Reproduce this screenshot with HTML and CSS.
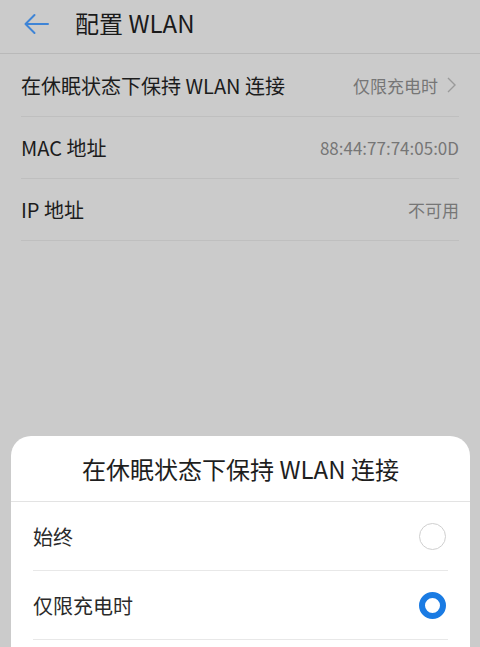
FILE: index.html
```html
<!DOCTYPE html>
<html lang="zh-CN">
<head>
<meta charset="utf-8">
<link rel="stylesheet" href="styles.css">
</head>
<body>
<div class="screen">
  <header class="topbar">
    <svg class="back" width="26" height="22" viewBox="0 0 26 22">
      <path d="M25 11H2.5M11.5 2L2.5 11L11.5 20" fill="none" stroke="#3e84d6" stroke-width="2" stroke-linecap="round" stroke-linejoin="round"/>
    </svg>
    <h1 class="title">配置 WLAN</h1>
  </header>
  <div class="list">
    <div class="row">
      <span class="label">在休眠状态下保持 WLAN 连接</span>
      <span class="value">仅限充电时
        <svg class="chev" width="9" height="16" viewBox="0 0 9 16"><path d="M1 1L8 8L1 15" fill="none" stroke="#9a9a9a" stroke-width="1.4"/></svg>
      </span>
    </div>
    <div class="row">
      <span class="label">MAC 地址</span>
      <span class="value">88:44:77:74:05:0D</span>
    </div>
    <div class="row">
      <span class="label">IP 地址</span>
      <span class="value">不可用</span>
    </div>
  </div>
  <div class="dialog">
    <div class="dlg-title">在休眠状态下保持 WLAN 连接</div>
    <div class="options">
      <div class="option">
        <span class="opt-label">始终</span>
        <span class="radio"></span>
      </div>
      <div class="option">
        <span class="opt-label">仅限充电时</span>
        <span class="radio on"></span>
      </div>
    </div>
  </div>
</div>
</body>
</html>
```
FILE: styles.css
```css
html, body {
  margin: 0;
  padding: 0;
}
body {
  width: 480px;
  height: 647px;
  overflow: hidden;
  background: #cbcbcb;
  font-family: "Noto Sans CJK SC", "Noto Sans", sans-serif;
  color: #1c1c1c;
}
.screen {
  position: relative;
  width: 480px;
  height: 647px;
  overflow: hidden;
}
.topbar {
  height: 53px;
  border-bottom: 1px solid #b9b9b9;
  display: flex;
  align-items: center;
  padding-left: 23px;
  box-sizing: content-box;
}
.back {
  display: block;
  margin-top: -6px;
}
.title {
  margin: -8px 0 0 26px;
  font-size: 24px;
  font-weight: 400;
  color: #1a1a1a;
}
.list {
  padding: 1px 21px 0;
}
.row {
  height: 61px;
  border-bottom: 1px solid #bfbfbf;
  display: flex;
  align-items: center;
  justify-content: space-between;
}
.label {
  font-size: 20px;
  color: #1c1c1c;
  margin-top: -1px;
}
.value {
  font-size: 17px;
  color: #767676;
  display: flex;
  align-items: center;
  gap: 9px;
  margin-top: -1px;
}
.chev {
  display: block;
  margin-right: 3px;
}
.dialog {
  position: absolute;
  left: 11px;
  right: 10px;
  top: 436px;
  height: 260px;
  background: #fff;
  border-radius: 20px 20px 0 0;
}
.dlg-title {
  height: 65px;
  border-bottom: 1px solid #e3e3e3;
  display: flex;
  align-items: center;
  justify-content: center;
  font-size: 24px;
  color: #1e1e1e;
}
.options {
  padding: 0 22px;
}
.option {
  height: 68px;
  border-bottom: 1px solid #e8e8e8;
  display: flex;
  align-items: center;
  justify-content: space-between;
}
.opt-label {
  font-size: 20px;
  color: #2a2a2a;
}
.radio {
  width: 27px;
  height: 27px;
  box-sizing: border-box;
  border-radius: 50%;
  border: 1.5px solid #cfcfcf;
  margin-right: 2px;
}
.radio.on {
  border: 6.5px solid #1a7be3;
}
```
